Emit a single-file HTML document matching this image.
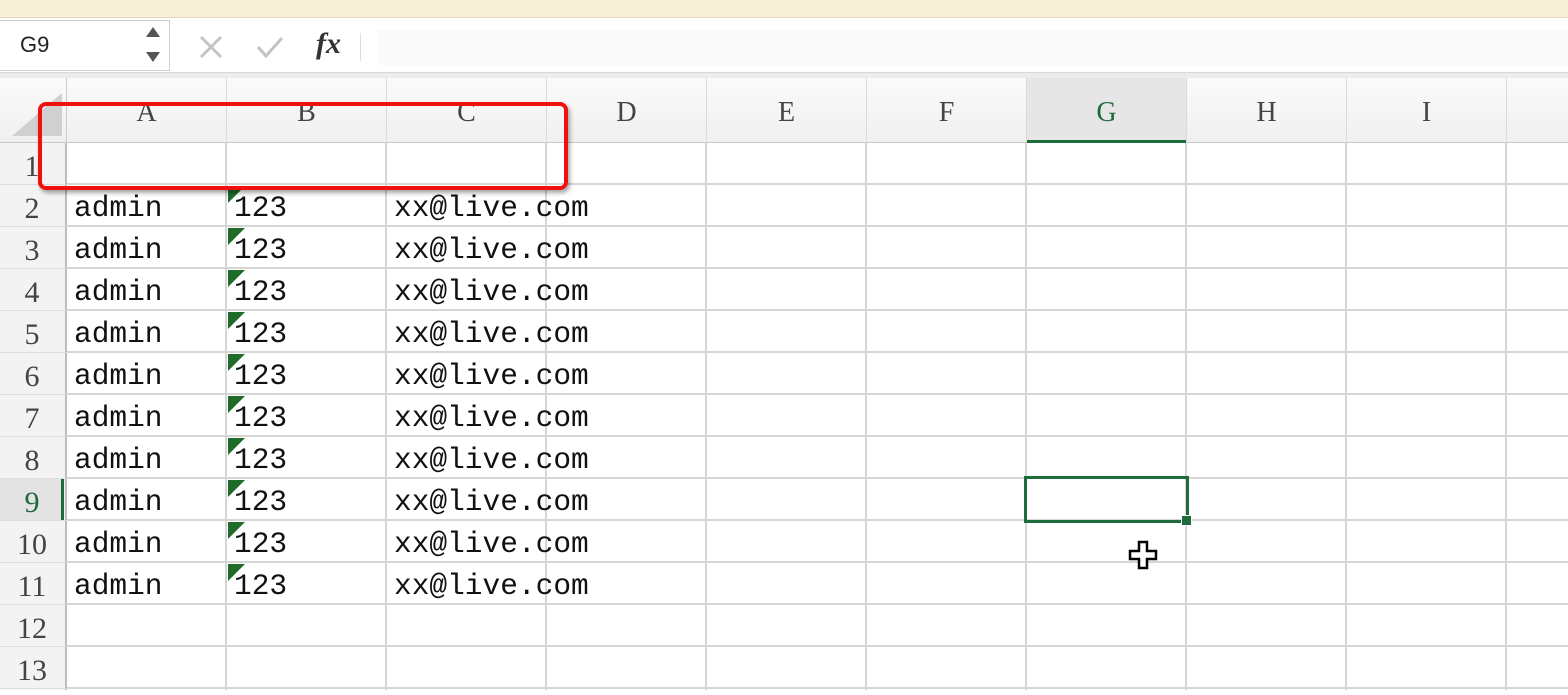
<!DOCTYPE html>
<html><head><meta charset="utf-8"><style>
*{margin:0;padding:0;box-sizing:border-box}
body{width:1568px;height:690px;overflow:hidden;background:#fff;position:relative;font-family:"Liberation Sans",sans-serif}
.a{position:absolute}
.banner{left:0;top:0;width:1568px;height:18px;background:#f8f0d6;border-bottom:1px solid #e0d6b8}
.fbar{left:0;top:18px;width:1568px;height:55px;background:#fff;border-bottom:1px solid #d8d8d8}
.gap{left:0;top:73px;width:1568px;height:5px;background:#ececec}
.hdr{left:0;top:78px;width:1568px;height:65px;background:linear-gradient(#fafafa,#f0f0f0);border-bottom:1px solid #c8c8c8}
.rh{left:0;top:143px;width:67px;height:547px;background:#f3f3f3;border-right:2px solid #bdbdbd}
.grid{left:67px;top:143px;width:1501px;height:547px;
background:repeating-linear-gradient(to right,transparent 0 158px,#d6d6d6 158px 160px),repeating-linear-gradient(to bottom,transparent 0 40px,#d6d6d6 40px 42px)}
.ch{top:78px;width:160px;height:65px;text-align:center;font:28px "Liberation Serif",serif;line-height:70px;color:#444;border-right:1px solid #dadada}
.rn{left:0;width:64px;height:42px;text-align:center;font:30px "Liberation Serif",serif;line-height:48px;color:#444}
.t{font:29.5px "Liberation Mono",monospace;line-height:46px;color:#111;height:42px}
.tri{width:0;height:0;border-top:17px solid #1e6b2a;border-right:17px solid transparent}
</style></head><body>
<div class="a banner"></div>
<div class="a fbar"></div>
<div class="a" style="left:0;top:20px;width:170px;height:51px;border:1px solid #cfcfcf;border-left:none;background:#fff"></div>
<div class="a" style="left:20px;top:32px;font-size:22px;color:#222">G9</div>
<div class="a" style="left:146px;top:27px;width:0;height:0;border-left:7px solid transparent;border-right:7px solid transparent;border-bottom:10px solid #555"></div>
<div class="a" style="left:146px;top:52px;width:0;height:0;border-left:7px solid transparent;border-right:7px solid transparent;border-top:10px solid #555"></div>
<svg class="a" style="left:198px;top:34px" width="26" height="26"><path d="M3 3L23 23M23 3L3 23" stroke="#c4c4c4" stroke-width="3"/></svg>
<svg class="a" style="left:255px;top:34px" width="30" height="26"><path d="M3 13L11 22L27 4" stroke="#c4c4c4" stroke-width="3" fill="none"/></svg>
<div class="a" style="left:316px;top:27px;font:italic bold 30px 'Liberation Serif',serif;color:#333">fx</div>
<div class="a" style="left:360px;top:33px;width:1px;height:28px;background:#ddd"></div>
<div class="a" style="left:378px;top:30px;width:1190px;height:35px;background:#fafafa"></div>
<div class="a gap"></div>
<div class="a hdr"></div>
<div class="a" style="left:1027px;top:78px;width:160px;height:65px;background:#e6e6e6;border-bottom:3px solid #1e6b3c"></div>
<div class="a" style="left:0;top:78px;width:67px;height:65px;border-right:1px solid #ccc"></div>
<div class="a" style="left:12px;top:93px;width:0;height:0;border-bottom:43px solid #d0d0d0;border-left:50px solid transparent"></div>
<div class="a ch" style="left:67px">A</div><div class="a ch" style="left:227px">B</div><div class="a ch" style="left:387px">C</div><div class="a ch" style="left:547px">D</div><div class="a ch" style="left:707px">E</div><div class="a ch" style="left:867px">F</div><div class="a ch" style="left:1027px;color:#1e6b3c">G</div><div class="a ch" style="left:1187px">H</div><div class="a ch" style="left:1347px">I</div>
<div class="a rh"></div>
<div class="a" style="left:0;top:479px;width:64px;height:42px;background:#e3e3e3;border-right:3px solid #1e6b3c"></div>
<div class="a grid"></div>
<div class="a" style="left:0;top:143px;width:67px;height:547px;background:repeating-linear-gradient(to bottom,transparent 0 41px,#dcdcdc 41px 42px)"></div>
<div class="a rn" style="top:143px">1</div><div class="a rn" style="top:185px">2</div><div class="a rn" style="top:227px">3</div><div class="a rn" style="top:269px">4</div><div class="a rn" style="top:311px">5</div><div class="a rn" style="top:353px">6</div><div class="a rn" style="top:395px">7</div><div class="a rn" style="top:437px">8</div><div class="a rn" style="top:479px;color:#1e6b3c">9</div><div class="a rn" style="top:521px">10</div><div class="a rn" style="top:563px">11</div><div class="a rn" style="top:605px">12</div><div class="a rn" style="top:647px">13</div>

<div class="a t" style="left:74px;top:185px">admin</div><div class="a t" style="left:234px;top:185px">123</div><div class="a t" style="left:394px;top:185px">xx@live.com</div><div class="a tri" style="left:228px;top:186px"></div>
<div class="a t" style="left:74px;top:227px">admin</div><div class="a t" style="left:234px;top:227px">123</div><div class="a t" style="left:394px;top:227px">xx@live.com</div><div class="a tri" style="left:228px;top:228px"></div>
<div class="a t" style="left:74px;top:269px">admin</div><div class="a t" style="left:234px;top:269px">123</div><div class="a t" style="left:394px;top:269px">xx@live.com</div><div class="a tri" style="left:228px;top:270px"></div>
<div class="a t" style="left:74px;top:311px">admin</div><div class="a t" style="left:234px;top:311px">123</div><div class="a t" style="left:394px;top:311px">xx@live.com</div><div class="a tri" style="left:228px;top:312px"></div>
<div class="a t" style="left:74px;top:353px">admin</div><div class="a t" style="left:234px;top:353px">123</div><div class="a t" style="left:394px;top:353px">xx@live.com</div><div class="a tri" style="left:228px;top:354px"></div>
<div class="a t" style="left:74px;top:395px">admin</div><div class="a t" style="left:234px;top:395px">123</div><div class="a t" style="left:394px;top:395px">xx@live.com</div><div class="a tri" style="left:228px;top:396px"></div>
<div class="a t" style="left:74px;top:437px">admin</div><div class="a t" style="left:234px;top:437px">123</div><div class="a t" style="left:394px;top:437px">xx@live.com</div><div class="a tri" style="left:228px;top:438px"></div>
<div class="a t" style="left:74px;top:479px">admin</div><div class="a t" style="left:234px;top:479px">123</div><div class="a t" style="left:394px;top:479px">xx@live.com</div><div class="a tri" style="left:228px;top:480px"></div>
<div class="a t" style="left:74px;top:521px">admin</div><div class="a t" style="left:234px;top:521px">123</div><div class="a t" style="left:394px;top:521px">xx@live.com</div><div class="a tri" style="left:228px;top:522px"></div>
<div class="a t" style="left:74px;top:563px">admin</div><div class="a t" style="left:234px;top:563px">123</div><div class="a t" style="left:394px;top:563px">xx@live.com</div><div class="a tri" style="left:228px;top:564px"></div>

<div class="a" style="left:1024px;top:476px;width:165px;height:47px;border:3px solid #1e6b3c"></div>
<div class="a" style="left:1181px;top:515px;width:11px;height:11px;background:#1e6b3c;border:1px solid #fff"></div>
<svg class="a" style="left:1128px;top:540px" width="32" height="32"><path d="M11 2H19V11H28V19H19V28H11V19H2V11H11Z" fill="#fff" stroke="#000" stroke-width="2.5"/></svg>
<div class="a" style="left:38px;top:102px;width:530px;height:88px;border:4px solid #f01010;border-radius:8px;box-shadow:2px 3px 4px rgba(0,0,0,.35)"></div>
</body></html>
